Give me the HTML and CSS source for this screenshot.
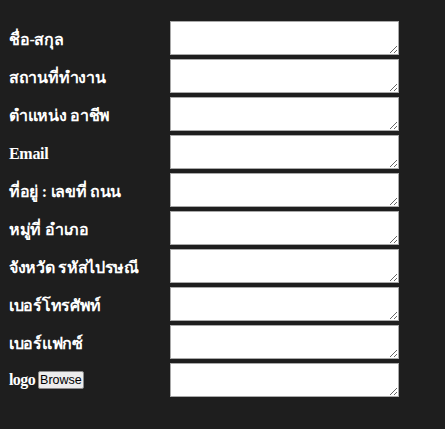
FILE: index.html
```html
<!DOCTYPE html>
<html lang="th">
<head>
<meta charset="utf-8">
<title>Form</title>
<link rel="stylesheet" href="styles.css">
</head>
<body>
<form class="form">
  <label class="label">ชื่อ-สกุล</label><textarea class="field"></textarea>
  <label class="label">สถานที่ทำงาน</label><textarea class="field"></textarea>
  <label class="label">ตำแหน่ง อาชีพ</label><textarea class="field"></textarea>
  <label class="label">Email</label><textarea class="field"></textarea>
  <label class="label">ที่อยู่ : เลขที่ ถนน</label><textarea class="field"></textarea>
  <label class="label">หมู่ที่ อำเภอ</label><textarea class="field"></textarea>
  <label class="label">จังหวัด รหัสไปรษณี</label><textarea class="field"></textarea>
  <label class="label">เบอร์โทรศัพท์</label><textarea class="field"></textarea>
  <label class="label">เบอร์แฟกซ์</label><textarea class="field"></textarea>
  <label class="label label-logo">logo <button type="button" class="browse">Browse</button></label><textarea class="field"></textarea>
</form>
</body>
</html>
```
FILE: styles.css
```css
html, body {
  background: #1e1e1e;
}
body {
  margin: 0;
  padding: 21px 0 0 9px;
  color: #ffffff;
  font-family: "Liberation Serif", "Noto Sans", serif;
  font-size: 16px;
  font-weight: bold;
}
.form {
  display: grid;
  grid-template-columns: 161px 229px;
  grid-auto-rows: 34px;
  row-gap: 4px;
  align-items: center;
}
.label {
  white-space: nowrap;
  line-height: 18px;
  padding-top: 3px;
  letter-spacing: -0.3px;
}
.label-logo {
  display: flex;
  align-items: center;
  letter-spacing: -0.6px;
  padding-top: 0;
}
.browse {
  margin-left: 3px;
  letter-spacing: 0;
  font-family: "Liberation Sans", Arial, sans-serif;
  font-weight: normal;
  font-size: 12.5px;
  line-height: 14px;
  padding: 0 1px;
  height: 18px;
  border: 1px solid #8a8a8a;
  border-radius: 2px;
  background: #ececec;
  color: #000;
}
.field {
  box-sizing: border-box;
  width: 229px;
  height: 34px;
  margin: 0;
  border: 1px solid #a9a9a9;
  background: #ffffff;
  padding: 2px;
  resize: both;
}
```
